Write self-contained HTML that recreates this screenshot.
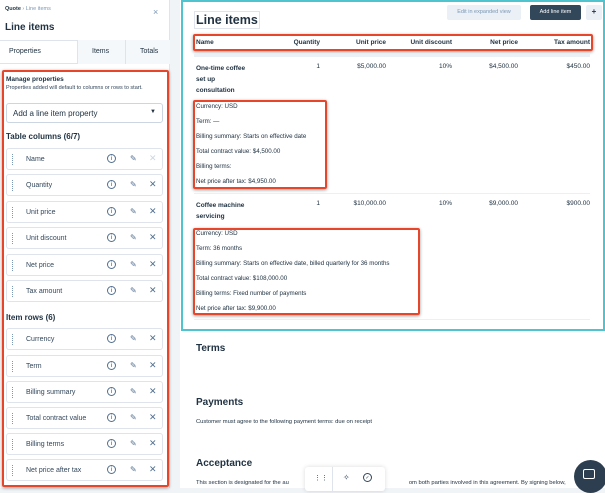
<!DOCTYPE html>
<html><head><style>
*{box-sizing:border-box;margin:0;padding:0}
body{width:605px;height:488px;overflow:hidden;background:#f1f4f7;font-family:"Liberation Sans",sans-serif;color:#213343;position:relative}
.abs{position:absolute}
#left{left:0;top:0;width:170px;height:488px;background:#fff;border-right:1px solid #dfe3eb}
.row{position:absolute;left:6px;width:157px;height:22px;border:1px solid #dfe3eb;border-radius:3px;background:#fff;font-size:7px;color:#33475b}
.row .g{position:absolute;left:5px;top:5px;width:1px;height:11px;border-left:1.5px dotted #7c98b6}
.row .t{position:absolute;left:19px;top:7px}
.row .i{position:absolute;left:100px;top:5px;width:9px;height:9px;border:1px solid #516f90;border-radius:50%;font-size:6px;text-align:center;line-height:8px}
.row .p{position:absolute;left:123px;top:5px;font-size:8px;color:#516f90}
.row .x{position:absolute;left:142px;top:4px;font-size:9px;color:#516f90}
.red{position:absolute;border:2.5px solid #e8462a;border-radius:2px;box-shadow:0 1px 3px rgba(0,0,0,.4)}
.sm{font-size:7px}
.b{font-weight:bold}
.r{text-align:right}
</style></head><body>
<div id="left" class="abs">
 <div class="abs sm" style="left:5px;top:6px;font-size:5.5px"><b>Quote</b> <span style="color:#7c98b6">› Line items</span></div>
 <div class="abs" style="left:153px;top:7px;font-size:9px;color:#7c98b6">×</div>
 <div class="abs b" style="left:5px;top:22px;font-size:10px">Line items</div>
 <div class="abs" style="left:0;top:40px;width:170px;height:24px;border-top:1px solid #dfe3eb;border-bottom:1px solid #dfe3eb"></div>
 <div class="abs" style="left:77px;top:40px;width:93px;height:24px;background:#f5f8fa;border-left:1px solid #dfe3eb"></div>
 <div class="abs" style="left:125px;top:40px;width:1px;height:24px;background:#dfe3eb"></div>
 <div class="abs sm" style="left:9px;top:48px">Properties</div>
 <div class="abs sm" style="left:92px;top:48px">Items</div>
 <div class="abs sm" style="left:140px;top:48px">Totals</div>
 <div class="abs b" style="left:6px;top:76px;font-size:6.5px">Manage properties</div>
 <div class="abs" style="left:6px;top:85px;font-size:5.5px;width:155px;line-height:7px;color:#33475b">Properties added will default to columns or rows to start.</div>
 <div class="abs" style="left:6px;top:103px;width:157px;height:20px;border:1px solid #cbd6e2;border-radius:3px;font-size:8px;padding:5px 6px">Add a line item property<span style="position:absolute;right:6px;top:5px;font-size:6px">▼</span></div>
 <div class="abs b" style="left:6px;top:132px;font-size:8px">Table columns (6/7)</div>
 <div class="abs b" style="left:6px;top:313px;font-size:8px">Item rows (6)</div>
</div>
<div class="row" style="top:148px"><span class="g"></span><span class="t">Name</span><span class="i">i</span><span class="p">✎</span><span class="x" style="color:#cbd6e2">✕</span></div>
<div class="row" style="top:174px"><span class="g"></span><span class="t">Quantity</span><span class="i">i</span><span class="p">✎</span><span class="x">✕</span></div>
<div class="row" style="top:201px"><span class="g"></span><span class="t">Unit price</span><span class="i">i</span><span class="p">✎</span><span class="x">✕</span></div>
<div class="row" style="top:227px"><span class="g"></span><span class="t">Unit discount</span><span class="i">i</span><span class="p">✎</span><span class="x">✕</span></div>
<div class="row" style="top:254px"><span class="g"></span><span class="t">Net price</span><span class="i">i</span><span class="p">✎</span><span class="x">✕</span></div>
<div class="row" style="top:280px"><span class="g"></span><span class="t">Tax amount</span><span class="i">i</span><span class="p">✎</span><span class="x">✕</span></div>
<div class="row" style="top:328px"><span class="g"></span><span class="t">Currency</span><span class="i">i</span><span class="p">✎</span><span class="x">✕</span></div>
<div class="row" style="top:355px"><span class="g"></span><span class="t">Term</span><span class="i">i</span><span class="p">✎</span><span class="x">✕</span></div>
<div class="row" style="top:381px"><span class="g"></span><span class="t">Billing summary</span><span class="i">i</span><span class="p">✎</span><span class="x">✕</span></div>
<div class="row" style="top:407px"><span class="g"></span><span class="t">Total contract value</span><span class="i">i</span><span class="p">✎</span><span class="x">✕</span></div>
<div class="row" style="top:433px"><span class="g"></span><span class="t">Billing terms</span><span class="i">i</span><span class="p">✎</span><span class="x">✕</span></div>
<div class="row" style="top:459px"><span class="g"></span><span class="t">Net price after tax</span><span class="i">i</span><span class="p">✎</span><span class="x">✕</span></div>
<div class="red" style="left:2px;top:70px;width:167px;height:417px"></div>

<div class="abs" style="left:180px;top:0;width:425px;height:488px;background:#fff"></div>
<div class="abs" style="left:181px;top:0;width:424px;height:331px;border:2px solid #4fc4cf"></div>
<div class="abs b" style="left:194px;top:11px;font-size:12.5px;border:1px solid #dfe3eb;padding:1px 1px">Line items</div>
<div class="abs" style="left:447px;top:5px;width:74px;height:15px;background:#eaf0f6;border-radius:2px;font-size:5.5px;color:#7c98b6;text-align:center;line-height:15px">Edit in expanded view</div>
<div class="abs" style="left:530px;top:5px;width:51px;height:15px;background:#33475b;border-radius:2px;font-size:5.5px;color:#fff;text-align:center;line-height:15px">Add line item</div>
<div class="abs b" style="left:586px;top:5px;width:16px;height:15px;background:#eaf0f6;border-radius:2px;font-size:8px;text-align:center;line-height:14px">+</div>
<div class="abs b" style="left:196px;top:39px;width:394px;font-size:6.5px">
 <span class="abs" style="left:0">Name</span>
 <span class="abs r" style="right:270px">Quantity</span>
 <span class="abs r" style="right:204px">Unit price</span>
 <span class="abs r" style="right:138px">Unit discount</span>
 <span class="abs r" style="right:72px">Net price</span>
 <span class="abs r" style="right:0">Tax amount</span>
</div>
<div class="red" style="left:193px;top:34px;width:400px;height:17px"></div>
<div class="abs" style="left:194px;top:54px;width:396px;height:3px;background:#eaf0f6"></div>

<div class="abs" style="left:196px;top:63px;width:394px;font-size:6.5px">
 <span class="abs b" style="left:0;line-height:11px">One-time coffee<br>set up<br>consultation</span>
 <span class="abs r" style="right:270px">1</span>
 <span class="abs r" style="right:204px">$5,000.00</span>
 <span class="abs r" style="right:138px">10%</span>
 <span class="abs r" style="right:72px">$4,500.00</span>
 <span class="abs r" style="right:0">$450.00</span>
</div>
<div class="abs" style="left:196px;top:99px;font-size:6.2px;line-height:15px">Currency: USD<br>Term: —<br>Billing summary: Starts on effective date<br>Total contract value: $4,500.00<br>Billing terms:<br>Net price after tax: $4,950.00</div>
<div class="red" style="left:193px;top:100px;width:134px;height:89px"></div>
<div class="abs" style="left:194px;top:193px;width:396px;height:1px;background:#eaf0f6"></div>

<div class="abs" style="left:196px;top:200px;width:394px;font-size:6.5px">
 <span class="abs b" style="left:0;line-height:11px">Coffee machine<br>servicing</span>
 <span class="abs r" style="right:270px">1</span>
 <span class="abs r" style="right:204px">$10,000.00</span>
 <span class="abs r" style="right:138px">10%</span>
 <span class="abs r" style="right:72px">$9,000.00</span>
 <span class="abs r" style="right:0">$900.00</span>
</div>
<div class="abs" style="left:196px;top:226px;font-size:6.2px;line-height:15px">Currency: USD<br>Term: 36 months<br>Billing summary: Starts on effective date, billed quarterly for 36 months<br>Total contract value: $108,000.00<br>Billing terms: Fixed number of payments<br>Net price after tax: $9,900.00</div>
<div class="red" style="left:193px;top:228px;width:227px;height:87px"></div>
<div class="abs" style="left:194px;top:319px;width:396px;height:1px;background:#eaf0f6"></div>

<div class="abs b" style="left:196px;top:343px;font-size:10px">Terms</div>
<div class="abs b" style="left:196px;top:397px;font-size:10px">Payments</div>
<div class="abs" style="left:196px;top:419px;font-size:5.8px">Customer must agree to the following payment terms: due on receipt</div>
<div class="abs b" style="left:196px;top:458px;font-size:10px">Acceptance</div>
<div class="abs" style="left:196px;top:480px;font-size:5.8px;white-space:nowrap">This section is designated for the au<span style="display:inline-block;width:120px"></span>om both parties involved in this agreement. By signing below,</div>
<div class="abs" style="left:305px;top:467px;width:80px;height:24px;background:#fff;box-shadow:0 0 5px rgba(0,0,0,.15);border-radius:3px;font-size:8px;color:#33475b">
 <span class="abs" style="left:9px;top:7px;font-size:7px">⋮⋮</span>
 <span class="abs" style="left:27px;top:0;width:1px;height:24px;background:#dfe3eb"></span>
 <span class="abs" style="left:38px;top:6px">✧</span>
 <span class="abs" style="left:58px;top:6px;width:9px;height:9px;border:1px solid #33475b;border-radius:50%;font-size:5px;text-align:center;line-height:8px">✓</span>
</div>
<div class="abs" style="left:574px;top:460px;width:33px;height:33px;border-radius:50%;background:#2d3e50"></div>
<div class="abs" style="left:583px;top:469px;width:12px;height:10px;border:1.5px solid #fff;border-radius:2px"></div>
</body></html>
